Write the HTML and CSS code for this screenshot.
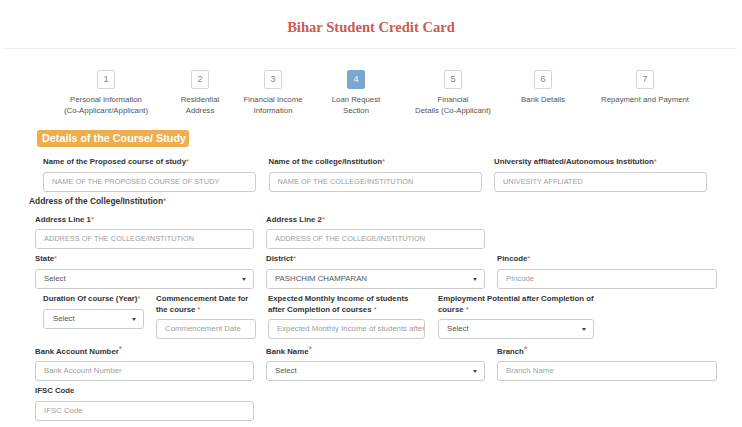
FILE: index.html
```html
<!DOCTYPE html>
<html>
<head>
<meta charset="utf-8">
<link rel="stylesheet" href="styles.css">
</head>
<body>
<div class="page">
  <header class="head">
    <h1 class="title">Bihar Student Credit Card</h1>
  </header>
  <div class="rule"></div>

  <ol class="steps">
    <li class="step s1"><span class="box">1</span><span class="lbl">Personal Information<br>(Co-Applicant/Applicant)</span></li>
    <li class="step s2"><span class="box">2</span><span class="lbl">Residential<br>Address</span></li>
    <li class="step s3"><span class="box">3</span><span class="lbl">Financial Income<br>Information</span></li>
    <li class="step s4 active"><span class="box">4</span><span class="lbl">Loan Request<br>Section</span></li>
    <li class="step s5"><span class="box">5</span><span class="lbl">Financial<br>Details (Co-Applicant)</span></li>
    <li class="step s6"><span class="box">6</span><span class="lbl">Bank Details</span></li>
    <li class="step s7"><span class="box">7</span><span class="lbl">Repayment and Payment</span></li>
  </ol>

  <div class="badge">Details of the Course/ Study</div>

  <div class="grid row1">
    <div class="field">
      <label>Name of the Proposed course of study<i>*</i></label>
      <div class="input ph up">NAME OF THE PROPOSED COURSE OF STUDY</div>
    </div>
    <div class="field">
      <label>Name of the college/Institution<i>*</i></label>
      <div class="input ph up">NAME OF THE COLLEGE/INSTITUTION</div>
    </div>
    <div class="field">
      <label>University affliated/Autonomous Institution<i>*</i></label>
      <div class="input ph up">UNIVESITY AFFLIATED</div>
    </div>
  </div>

  <div class="subhead">Address of the College/Institution<i>*</i></div>

  <div class="grid row2">
    <div class="field">
      <label>Address Line 1<i>*</i></label>
      <div class="input ph up">ADDRESS OF THE COLLEGE/INSTITUTION</div>
    </div>
    <div class="field">
      <label>Address Line 2<i>*</i></label>
      <div class="input ph up">ADDRESS OF THE COLLEGE/INSTITUTION</div>
    </div>
  </div>

  <div class="grid row3">
    <div class="field">
      <label>State<i>*</i></label>
      <div class="input select">Select</div>
    </div>
    <div class="field">
      <label>District<i>*</i></label>
      <div class="input select">PASHCHIM CHAMPARAN</div>
    </div>
    <div class="field">
      <label>Pincode<i>*</i></label>
      <div class="input ph">Pincode</div>
    </div>
  </div>

  <div class="row4">
    <div class="field f-dur">
      <label>Duration Of course (Year)<i>*</i></label>
      <div class="input select sel-sm">Select</div>
    </div>
    <div class="field f-com">
      <label>Commencement Date for the course <i>*</i></label>
      <div class="input ph">Commencement Date</div>
    </div>
    <div class="field f-exp">
      <label>Expected Monthly Income of students after Completion of courses <i>*</i></label>
      <div class="input ph clip">Expected Monthly Income of students after completion</div>
    </div>
    <div class="field f-emp">
      <label>Employment Potential after Completion of course <i>*</i></label>
      <div class="input select">Select</div>
    </div>
  </div>

  <div class="grid row5">
    <div class="field">
      <label>Bank Account Number<i class="sup">*</i></label>
      <div class="input ph">Bank Account Number</div>
    </div>
    <div class="field">
      <label>Bank Name<i class="sup">*</i></label>
      <div class="input select">Select</div>
    </div>
    <div class="field">
      <label>Branch<i class="sup">*</i></label>
      <div class="input ph">Branch Name</div>
    </div>
  </div>

  <div class="grid row6">
    <div class="field">
      <label>IFSC Code</label>
      <div class="input ph">IFSC Code</div>
    </div>
  </div>
</div>
</body>
</html>
```

FILE: styles.css
```css
* { box-sizing: border-box; }
html, body { margin: 0; padding: 0; background: #fff; }
body {
  font-family: "Liberation Sans", Arial, sans-serif;
  color: #333;
  width: 742px;
  height: 427px;
  overflow: hidden;
}
.page { width: 742px; }

.head { padding-top: 18px; text-align: center; }
.title {
  margin: 0;
  font-family: "Liberation Serif", "DejaVu Serif", serif;
  font-weight: bold;
  font-size: 14.6px;
  line-height: 19px;
  color: #cf5a52;
}
.rule {
  margin: 11px 5px 0;
  border-top: 1px solid #ececec;
}

.steps {
  list-style: none;
  margin: 21px 0 0 50px;
  padding: 0;
  display: flex;
}
.step {
  display: flex;
  flex-direction: column;
  align-items: center;
  text-align: center;
}
.s1 { width: 112px; }
.s2 { width: 76px; }
.s3 { width: 70px; }
.s4 { width: 96px; }
.s5 { width: 98px; }
.s6 { width: 82px; }
.s7 { width: 122px; }
.box {
  width: 18px;
  height: 19px;
  border: 1px solid #d6d6d6;
  border-radius: 2px;
  font-size: 9px;
  line-height: 17px;
  color: #888;
  background: #fff;
}
.active .box {
  background: #7ba6cf;
  border-color: #7ba6cf;
  color: #fff;
}
.lbl {
  margin-top: 5px;
  font-size: 7.8px;
  line-height: 11px;
  color: #555;
  white-space: nowrap;
}

.badge {
  margin: 14px 0 0 37px;
  width: 152px;
  height: 17px;
  background: #f0ad4e;
  border-radius: 3px;
  color: #fff;
  font-weight: bold;
  font-size: 10.8px;
  line-height: 17px;
  padding-left: 5px;
  white-space: nowrap;
}

label, .subhead {
  display: block;
  font-weight: bold;
  font-size: 7.8px;
  line-height: 11px;
  color: #333;
}
i { font-style: normal; color: #e0524a; font-weight: normal; }
i.sup { font-size: 9px; vertical-align: 2px; line-height: 0; }

.grid { display: grid; }
.row1 { margin: 9px 0 0 43px; grid-template-columns: 213px 213px 213px; column-gap: 12.5px; }
.row2 { margin: 7px 0 0 35px; grid-template-columns: 219px 219px; column-gap: 12px; }
.row3 { margin: 4px 0 0 35px; grid-template-columns: 219px 219px 220px; column-gap: 12px; }
.row5 { margin: 7px 0 0 35px; grid-template-columns: 219px 219px 220px; column-gap: 12px; }
.row6 { margin: 4px 0 0 35px; grid-template-columns: 219px; }

.subhead { margin: 4px 0 0 29px; font-size: 8.4px; }

.field label { margin-bottom: 4.5px; }

.input {
  height: 20px;
  border: 1px solid #ccc;
  border-radius: 3px;
  font-size: 7.8px;
  line-height: 18px;
  padding: 0 8px;
  color: #555;
  white-space: nowrap;
  overflow: hidden;
  position: relative;
  background: #fff;
}
.input.ph { color: #a0a0a0; }
.input.up { font-size: 7.4px; }
.input.clip { text-overflow: clip; }
.select::after {
  content: "";
  position: absolute;
  right: 7px;
  top: 8px;
  border-left: 2px solid transparent;
  border-right: 2px solid transparent;
  border-top: 3px solid #444;
}

.row4 {
  display: grid;
  margin: 4px 0 0 43px;
  grid-template-columns: 101px 100px 157px 157px;
  column-gap: 12px;
}
.f-emp { margin-left: 1px; }
.row4 .field { display: flex; flex-direction: column; }
.row4 label { margin-bottom: 4px; }
.sel-sm { padding-left: 9px; }
.f-com label, .f-exp label, .f-emp label { min-height: 22px; }
.f-dur label { margin-bottom: 5px; }
```
